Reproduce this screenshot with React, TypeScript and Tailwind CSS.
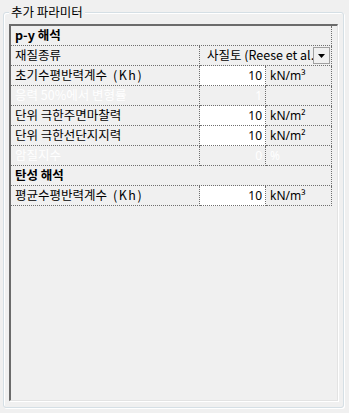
import React from 'react';

type Row =
  | { kind: 'header'; label: string }
  | { kind: 'combo'; label: string; value: string }
  | { kind: 'value' | 'disabled'; label: string; value: string; unit: string };

const rows: Row[] = [
  { kind: 'header', label: 'p-y 해석' },
  { kind: 'combo', label: '재질종류', value: '사질토 (Reese et al.)' },
  { kind: 'value', label: '초기수평반력계수 (Kh)', value: '10', unit: 'kN/m³' },
  { kind: 'disabled', label: '응력 50%에서 변형률', value: '1', unit: '' },
  { kind: 'value', label: '단위 극한주면마찰력', value: '10', unit: 'kN/m²' },
  { kind: 'value', label: '단위 극한선단지지력', value: '10', unit: 'kN/m²' },
  { kind: 'disabled', label: '암질지수', value: '0', unit: '%' },
  { kind: 'header', label: '탄성 해석' },
  { kind: 'value', label: '평균수평반력계수 (Kh)', value: '10', unit: 'kN/m³' },
];

const dot = 'border-dotted border-[#6f6f6f]';
// korean labels read wider than the latin numbers
const kr = 'font-["Noto_Sans_CJK_KR",sans-serif] text-[12.5px]';

// the old dialog font spaces out the "(Kh)" suffix
function Label({ text }: { text: string }) {
  const i = text.indexOf(' (');
  if (i < 0) return <>{text}</>;
  return (
    <>
      {text.slice(0, i)}
      <span className="ml-[6px] tracking-[1.5px]">{text.slice(i + 1)}</span>
    </>
  );
}

function GridRow({ row }: { row: Row }) {
  if (row.kind === 'header') {
    return (
      <div className={`col-span-3 h-5 flex items-center pl-1 font-bold border-b border-r ${dot} ${kr}`}>
        {row.label}
      </div>
    );
  }

  if (row.kind === 'combo') {
    return (
      <>
        <div className={`h-5 flex items-center pl-1 border-b border-r ${dot} ${kr}`}>{row.label}</div>
        <div className={`col-span-2 h-5 flex items-center border-b border-r ${dot}`}>
          <span className={`flex-1 overflow-hidden whitespace-nowrap pl-[7px] ${kr}`}>{row.value}</span>
          <span className="w-[17px] h-[17px] mr-[1px] flex items-center justify-center border border-[#a0a0a0] bg-[#f0f0f0]">
            <svg width="7" height="4" viewBox="0 0 7 4">
              <path d="M0 0h7L3.5 4z" fill="#000" />
            </svg>
          </span>
        </div>
      </>
    );
  }

  const off = row.kind === 'disabled';
  return (
    <>
      <div className={`h-5 flex items-center pl-1 border-b border-r ${dot} ${kr} ${off ? 'text-white' : ''}`}>
        <Label text={row.label} />
      </div>
      <div
        className={`h-5 flex items-center justify-end pr-[3px] border-b border-r ${dot} ${
          off ? 'text-white' : 'bg-white'
        }`}
      >
        {row.value}
      </div>
      <div className={`h-5 flex items-center pl-1 border-b border-r ${dot} ${off ? 'text-white' : ''}`}>
        {row.unit}
      </div>
    </>
  );
}

export default function App() {
  return (
    <div
      className="w-[349px] h-[413px] bg-[#f0f0f0] text-[12px] text-black pt-3 pl-[3px]"
      style={{ fontFamily: '"Noto Sans", "Noto Sans CJK KR", sans-serif' }}
    >
      <div className="relative w-[341px] h-[396px] border border-[#d5dfe5] rounded-[3px] shadow-[inset_1px_1px_0_#ffffff,1px_1px_0_#ffffff] pt-[11px] pl-[5px]">
        {/* group title */}
        <span className={`absolute -top-[9px] left-[5px] px-[2px] bg-[#f0f0f0] leading-[16px] ${kr}`}>
          추가 파라미터
        </span>

        {/* sunken panel */}
        <div className="w-[329px] h-[377px] border-t-2 border-l-2 border-t-[#6b6b6b] border-l-[#6b6b6b] border-r border-b border-r-[#e3e3e3] border-b-[#e3e3e3] shadow-[1px_1px_0_#ffffff]">
          <div className="grid grid-cols-[189px_66px_66px] w-[321px] leading-none">
            {rows.map((r, i) => (
              <GridRow key={i} row={r} />
            ))}
          </div>
        </div>
      </div>
    </div>
  );
}
